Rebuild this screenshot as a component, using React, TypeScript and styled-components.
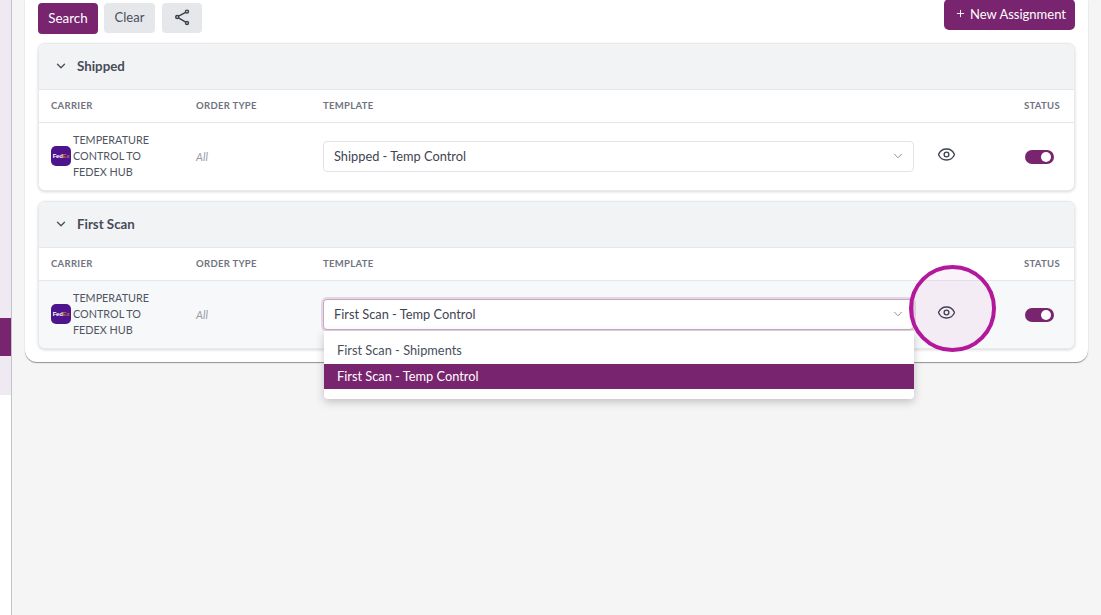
import React from "react";
import styled, { createGlobalStyle } from "styled-components";
import { ChevronDown, Eye, Plus } from "lucide-react";

const purple = "#78246f";

const GlobalStyle = createGlobalStyle`
  html, body {
    margin: 0;
    padding: 0;
    height: 100%;
    background: #f5f5f6;
    overflow: hidden;
  }
  body {
    font-family: "Lato", "Liberation Sans", sans-serif;
    color: #3f4452;
  }
`;

const Page = styled.div`
  display: flex;
  height: 615px;
`;

const Sidebar = styled.aside`
  width: 11px;
  background: #fff;
  border-right: 1px solid #c4c4c8;
  flex-shrink: 0;
`;

const SidebarFill = styled.div`
  height: 395px;
  padding-top: 318px;
  box-sizing: border-box;
  background: #efe9f2;
`;

const SidebarActive = styled.div`
  height: 38px;
  background: ${purple};
`;

const Main = styled.main`
  flex: 1;
  padding: 0 13px;
  min-width: 0;
`;

const Card = styled.section`
  background: #fff;
  border-radius: 0 0 12px 12px;
  box-shadow: 0 1px 1px rgba(60, 60, 70, 0.55);
  padding: 0 13px 13px;
  height: 362px;
  box-sizing: border-box;
`;

const Toolbar = styled.div`
  display: flex;
  justify-content: space-between;
  align-items: flex-start;
  height: 43px;
`;

const ToolbarLeft = styled.div`
  display: flex;
  gap: 6px;
  padding-top: 3px;
`;

const Button = styled.button<{ $primary?: boolean }>`
  display: flex;
  align-items: center;
  justify-content: center;
  height: ${(p) => (p.$primary ? "31px" : "30px")};
  padding: 0 0 2px;
  border: none;
  border-radius: 4px;
  font-family: inherit;
  font-size: 13px;
  background: ${(p) => (p.$primary ? purple : "#e6e7eb")};
  color: ${(p) => (p.$primary ? "#fff" : "#4a4f5c")};
`;

const SearchButton = styled(Button)`
  width: 60px;
  font-size: 13.4px;
`;

const ClearButton = styled(Button)`
  width: 51px;
`;

const ShareButton = styled(Button)`
  width: 40px;
  margin-left: 1px;
  color: #3a3f4c;
`;

const NewButton = styled(Button)`
  width: 131px;
  gap: 4px;
  border-radius: 5px;
  margin-top: -1px;
  padding-left: 2px;
  font-size: 13px;
`;

const Groups = styled.div`
  display: flex;
  flex-direction: column;
  gap: 10.5px;
`;

const Group = styled.div`
  border: 1px solid #e8e9ec;
  border-radius: 7px;
  box-shadow: 0 1px 3px rgba(40, 40, 50, 0.18);
  background: #fff;
`;

const GroupHeader = styled.div`
  display: flex;
  align-items: center;
  gap: 9px;
  height: 43.5px;
  padding: 0 0 1px 15px;
  background: #f2f3f5;
  border-radius: 6px 6px 0 0;
  border-bottom: 1px solid #e6e7ea;
  font-size: 13.3px;
  font-weight: 700;
  color: #474c59;
`;

const Columns = styled.div`
  display: grid;
  grid-template-columns: 145px 127px 591px 110px 1fr;
  padding-left: 12px;
`;

const HeaderRow = styled(Columns)`
  height: 32px;
  align-items: center;
  border-bottom: 1px solid #e6e7ea;
  font-size: 9.5px;
  font-weight: 700;
  letter-spacing: 0.3px;
  color: #6f7480;
`;

const Row = styled(Columns)<{ $hover?: boolean }>`
  position: relative;
  height: 67px;
  align-items: center;
  background: ${(p) => (p.$hover ? "#f7f8fa" : "#fff")};
  border-radius: 0 0 6px 6px;
`;

const Carrier = styled.div`
  display: flex;
  align-items: center;
  gap: 2px;
  font-size: 10.8px;
  line-height: 16px;
  color: #50555f;
`;

const CarrierLogo = styled.div`
  width: 20px;
  height: 20px;
  border-radius: 5px;
  background: #4d148c;
  display: flex;
  align-items: center;
  justify-content: center;
  font-family: "Liberation Sans", sans-serif;
  font-size: 6px;
  font-weight: 700;
  letter-spacing: -0.3px;
  color: #fff;
  flex-shrink: 0;
`;

const LogoEx = styled.span`
  color: #b9703f;
`;

const CarrierName = styled.div`
  width: 90px;
`;

const OrderType = styled.div`
  font-size: 11px;
  font-style: italic;
  color: #9a9da6;
`;

const TemplateCell = styled.div`
  position: relative;
`;

const Select = styled.div<{ $open?: boolean }>`
  display: flex;
  align-items: center;
  justify-content: space-between;
  height: 31px;
  box-sizing: border-box;
  padding: 0 8px 1px 10px;
  background: #fff;
  border: 1px solid ${(p) => (p.$open ? "#c3abc1" : "#e2e3e7")};
  border-radius: 4px;
  box-shadow: ${(p) => (p.$open ? "0 0 0 2px #e6d6e5" : "none")};
  font-size: 12.8px;
  color: #3f4452;
  svg {
    color: #5f636e;
  }
`;

const Menu = styled.ul`
  position: absolute;
  top: 32px;
  left: 1px;
  right: 0;
  z-index: 2;
  margin: 0;
  padding: 7px 0 10px;
  list-style: none;
  background: #fff;
  border-radius: 0 0 4px 4px;
  box-shadow: 0 3px 8px rgba(40, 40, 50, 0.25);
`;

const MenuItem = styled.li<{ $selected?: boolean }>`
  display: flex;
  align-items: center;
  height: ${(p) => (p.$selected ? "25px" : "26px")};
  padding: 0 0 1px 13px;
  box-sizing: border-box;
  font-size: 12.8px;
  background: ${(p) => (p.$selected ? purple : "transparent")};
  color: ${(p) => (p.$selected ? "#fff" : "#4a4f5c")};
`;

const EyeCell = styled.div`
  position: relative;
  display: flex;
  padding: 0 0 4px 23px;
  color: #3d4250;
`;

const Highlight = styled.div`
  position: absolute;
  left: -5px;
  top: -37.5px;
  width: 87px;
  height: 87px;
  box-sizing: border-box;
  border: 4px solid #b3189b;
  border-radius: 50%;
  background: rgba(179, 24, 155, 0.05);
  z-index: 3;
  pointer-events: none;
`;

const Toggle = styled.div`
  display: flex;
  justify-content: flex-end;
  align-items: center;
  width: 29px;
  height: 14px;
  margin: 1px 0 0 1px;
  padding-right: 3px;
  box-sizing: border-box;
  border-radius: 7px;
  background: ${purple};
`;

const Knob = styled.span`
  width: 10px;
  height: 10px;
  border-radius: 50%;
  background: #fff;
`;

const ShareIcon = () => (
  <svg width="16" height="17" viewBox="0 0 16 17" fill="none" stroke="currentColor" strokeWidth="1.4">
    <circle cx="13" cy="2.6" r="1.5" />
    <circle cx="3.2" cy="8" r="1.5" />
    <circle cx="13" cy="14" r="1.5" />
    <path d="M11.7 3.4 4.5 7.2M4.5 8.8l7.2 4.4" />
  </svg>
);

const FedexLogo = () => (
  <CarrierLogo>
    Fed<LogoEx>Ex</LogoEx>
  </CarrierLogo>
);

const ColumnHeaders = () => (
  <HeaderRow>
    <div>CARRIER</div>
    <div>ORDER TYPE</div>
    <div>TEMPLATE</div>
    <div />
    <div>STATUS</div>
  </HeaderRow>
);

const CarrierCell = () => (
  <Carrier>
    <FedexLogo />
    <CarrierName>TEMPERATURE CONTROL TO FEDEX HUB</CarrierName>
  </Carrier>
);

export default function App() {
  return (
    <>
      <GlobalStyle />
      <Page>
        <Sidebar>
          <SidebarFill>
            <SidebarActive />
          </SidebarFill>
        </Sidebar>
        <Main>
          <Card>
            <Toolbar>
              <ToolbarLeft>
                <SearchButton $primary>Search</SearchButton>
                <ClearButton>Clear</ClearButton>
                <ShareButton>
                  <ShareIcon />
                </ShareButton>
              </ToolbarLeft>
              <NewButton $primary>
                <Plus size={11} strokeWidth={2} />
                New Assignment
              </NewButton>
            </Toolbar>
            <Groups>
              <Group>
                <GroupHeader>
                  <ChevronDown size={14} strokeWidth={2.2} />
                  Shipped
                </GroupHeader>
                <ColumnHeaders />
                <Row>
                  <CarrierCell />
                  <OrderType>All</OrderType>
                  <TemplateCell>
                    <Select>
                      Shipped - Temp Control
                      <ChevronDown size={14} strokeWidth={1.2} />
                    </Select>
                  </TemplateCell>
                  <EyeCell>
                    <Eye size={19} strokeWidth={1.7} />
                  </EyeCell>
                  <Toggle>
                    <Knob />
                  </Toggle>
                </Row>
              </Group>
              <Group>
                <GroupHeader>
                  <ChevronDown size={14} strokeWidth={2.2} />
                  First Scan
                </GroupHeader>
                <ColumnHeaders />
                <Row $hover>
                  <CarrierCell />
                  <OrderType>All</OrderType>
                  <TemplateCell>
                    <Select $open>
                      First Scan - Temp Control
                      <ChevronDown size={14} strokeWidth={1.2} />
                    </Select>
                    <Menu>
                      <MenuItem>First Scan - Shipments</MenuItem>
                      <MenuItem $selected>First Scan - Temp Control</MenuItem>
                    </Menu>
                  </TemplateCell>
                  <EyeCell>
                    <Eye size={19} strokeWidth={1.7} />
                    <Highlight />
                  </EyeCell>
                  <Toggle>
                    <Knob />
                  </Toggle>
                </Row>
              </Group>
            </Groups>
          </Card>
        </Main>
      </Page>
    </>
  );
}
